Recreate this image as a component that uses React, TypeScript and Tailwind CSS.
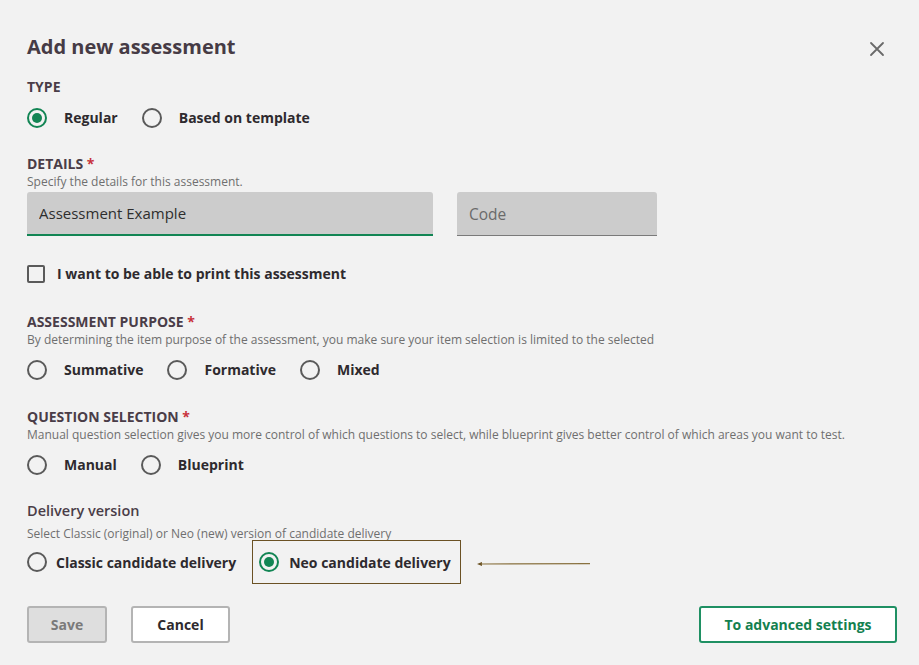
import React, { useState } from "react";

type Option = { value: string; label: string };

function Radio({
  checked,
  label,
  onClick,
  labelGap = "gap-[17px]",
}: {
  checked: boolean;
  label: string;
  onClick: () => void;
  labelGap?: string;
}) {
  return (
    <button type="button" onClick={onClick} className={`flex items-center ${labelGap}`}>
      <span
        className={`flex h-5 w-5 items-center justify-center rounded-full border-2 ${
          checked ? "border-[#128554]" : "border-[#5a5a5a]"
        }`}
      >
        {checked && <span className="h-[10px] w-[10px] rounded-full bg-[#128554]" />}
      </span>
      <span className="text-[14px] font-bold text-[#2e2a2e]">{label}</span>
    </button>
  );
}

function RadioGroup({
  options,
  value,
  onChange,
}: {
  options: Option[];
  value: string;
  onChange: (v: string) => void;
}) {
  return (
    <div className="flex items-center gap-6">
      {options.map((o) => (
        <Radio key={o.value} checked={value === o.value} label={o.label} onClick={() => onChange(o.value)} />
      ))}
    </div>
  );
}

function SectionTitle({ children, required }: { children: React.ReactNode; required?: boolean }) {
  return (
    <div className="text-[14px] font-bold uppercase leading-5 text-[#4a3d48]">
      {children}
      {required && <span className="text-[#c8323c]"> *</span>}
    </div>
  );
}

function Hint({ children }: { children: React.ReactNode }) {
  return <p className="text-[12px] leading-4 text-[#6f6f6f]">{children}</p>;
}

export default function App() {
  const [type, setType] = useState("regular");
  const [purpose, setPurpose] = useState("");
  const [selection, setSelection] = useState("");
  const [delivery, setDelivery] = useState("neo");
  const [printable, setPrintable] = useState(false);

  return (
    <div
      className="relative h-[665px] w-[919px] bg-[#f2f2f2] pl-[27px] pr-[22px]"
      style={{ fontFamily: '"Open Sans", "Liberation Sans", sans-serif' }}
    >
      {/* header */}
      <div className="flex items-center justify-between pt-[33px]">
        <h1 className="text-[20px] font-bold leading-7 text-[#463b45]">Add new assessment</h1>
        <button type="button" className="mr-[12px] mt-[4px] text-[#6a6a6a]">
          <svg width="16" height="16" viewBox="0 0 16 16" stroke="currentColor" strokeWidth="1.8" strokeLinecap="round">
            <path d="M2 2 L14 14 M14 2 L2 14" />
          </svg>
        </button>
      </div>

      {/* type */}
      <div className="mt-[16px]">
        <SectionTitle>Type</SectionTitle>
        <div className="mt-[10px]">
          <RadioGroup
            value={type}
            onChange={setType}
            options={[
              { value: "regular", label: "Regular" },
              { value: "template", label: "Based on template" },
            ]}
          />
        </div>
      </div>

      {/* details */}
      <div className="mt-[26px]">
        <SectionTitle required>Details</SectionTitle>
        <Hint>Specify the details for this assessment.</Hint>
        <div className="mt-[2px] flex gap-6">
          <input
            defaultValue="Assessment Example"
            className="h-[44px] w-[406px] rounded-t-[3px] border-b-2 border-[#128554] bg-[#cccccc] px-3 text-[15px] text-[#2e2e2e] outline-none"
          />
          <input
            placeholder="Code"
            className="h-[44px] w-[200px] rounded-t-[3px] border-b border-[#7a7a7a] bg-[#cccccc] px-3 text-[15.5px] text-[#2e2e2e] outline-none placeholder:text-[#6a6a6a]"
          />
        </div>
        <button type="button" onClick={() => setPrintable(!printable)} className="mt-[27px] flex items-center gap-3">
          <span className="h-[18px] w-[18px] rounded-[2px] border-2 border-[#5a5a5a] bg-[#f2f2f2]" />
          <span className="text-[14px] font-bold text-[#2e2a2e]">I want to be able to print this assessment</span>
        </button>
      </div>

      {/* purpose */}
      <div className="mt-[28px]">
        <SectionTitle required>Assessment purpose</SectionTitle>
        <Hint>By determining the item purpose of the assessment, you make sure your item selection is limited to the selected</Hint>
        <div className="mt-[11px]">
          <RadioGroup
            value={purpose}
            onChange={setPurpose}
            options={[
              { value: "summative", label: "Summative" },
              { value: "formative", label: "Formative" },
              { value: "mixed", label: "Mixed" },
            ]}
          />
        </div>
      </div>

      {/* question selection */}
      <div className="mt-[27px]">
        <SectionTitle required>Question selection</SectionTitle>
        <Hint>
          Manual question selection gives you more control of which questions to select, while blueprint gives better control of which areas you want to test.
        </Hint>
        <div className="mt-[11px]">
          <RadioGroup
            value={selection}
            onChange={setSelection}
            options={[
              { value: "manual", label: "Manual" },
              { value: "blueprint", label: "Blueprint" },
            ]}
          />
        </div>
      </div>

      {/* delivery */}
      <div className="mt-[26px]">
        <div className="text-[14.5px] font-semibold leading-5 text-[#4a3d48]">Delivery version</div>
        <p className="mt-[5px] text-[12px] leading-4 text-[#6f6f6f]">
          Select Classic (original) or Neo (new) version of candidate delivery
        </p>
        <div className="-mt-[2px] flex items-center">
          <Radio
            checked={delivery === "classic"}
            label="Classic candidate delivery"
            onClick={() => setDelivery("classic")}
            labelGap="gap-[9px]"
          />
          <div className="ml-[16px] flex h-[44px] w-[209px] items-center border border-[#6b5224] pl-[6px]">
            <Radio
              checked={delivery === "neo"}
              label="Neo candidate delivery"
              onClick={() => setDelivery("neo")}
              labelGap="gap-[10px]"
            />
          </div>
          <svg className="ml-[16px] mt-[4px]" width="114" height="6" viewBox="0 0 114 6">
            <path d="M0 3 L5 1 L5 5 Z" fill="#6b5224" />
            <path d="M4 3 L113 2.6" stroke="#8a7240" strokeWidth="1.2" />
          </svg>
        </div>
      </div>

      {/* footer */}
      <div className="mt-[22px] flex items-center justify-between">
        <div className="flex gap-6">
          <button
            type="button"
            disabled
            className="h-[37px] w-[80px] rounded-[3px] border-2 border-[#b4b4b4] bg-[#dedede] text-[14px] font-bold text-[#7a7a7a]"
          >
            Save
          </button>
          <button
            type="button"
            className="h-[37px] w-[99px] rounded-[3px] border-2 border-[#b4b4b4] bg-white text-[14px] font-bold text-[#2e2a2e]"
          >
            Cancel
          </button>
        </div>
        <button
          type="button"
          className="h-[37px] w-[198px] rounded-[3px] border-2 border-[#1f9063] bg-white text-[14px] font-bold text-[#13804f]"
        >
          To advanced settings
        </button>
      </div>
    </div>
  );
}
